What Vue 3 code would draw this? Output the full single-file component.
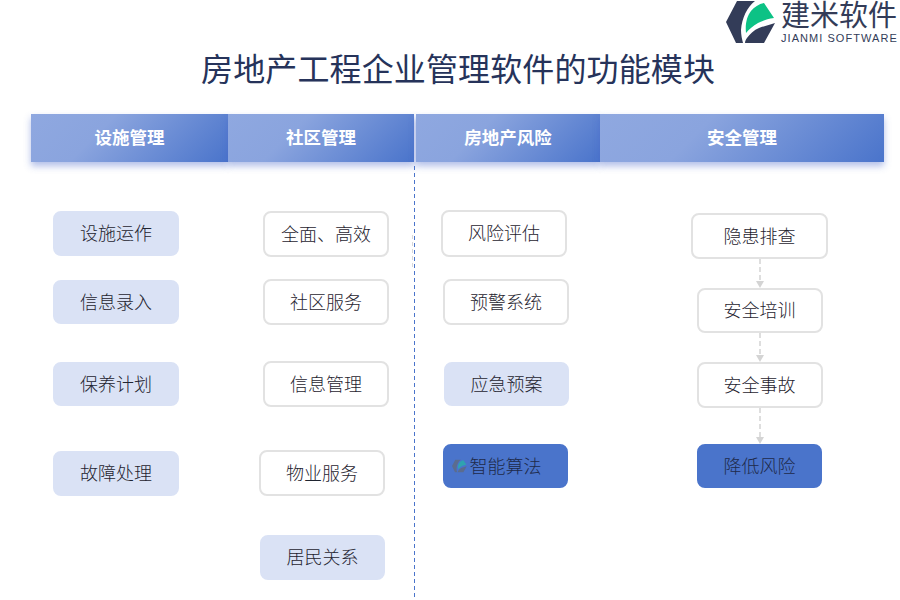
<template>
  <div class="page">
    <div class="brand">
      <svg class="brand-mark" viewBox="0 0 50 44" width="50" height="44" aria-hidden="true">
        <path fill="#333c58" d="M0 22 L11 1 H29 C21 7 16 18 15 30 C15 35 16 39 17 43 H10 Z" />
        <path fill="#0cc285" d="M20 33 C19 24 21 16 25 11 C28 7 33 4 38 3 L48 18 C41 19 36 21 32 23 C27 26 23 29 20 33 Z" />
        <path fill="#333c58" d="M49 23 L38 43 H19 C19 41 20 39 21 38 C24 34 28 30 33 28 C38 26 44 25 49 23 Z" />
      </svg>
      <div class="brand-text">
        <div class="brand-cn">建米软件</div>
        <div class="brand-en">JIANMI SOFTWARE</div>
      </div>
    </div>

    <h1 class="title">房地产工程企业管理软件的功能模块</h1>

    <div class="headers">
      <div v-for="h in headers" :key="h" class="header">{{ h }}</div>
    </div>

    <div class="board">
      <div class="divider"></div>
      <div class="divider-faint"></div>
      <div class="col col-a">
        <div v-for="n in colA" :key="n" class="node soft">{{ n }}</div>
      </div>
      <div class="col col-b">
        <div v-for="n in colB" :key="n" class="node">{{ n }}</div>
      </div>
      <div class="col col-c">
        <div class="node">风险评估</div>
        <div class="node">预警系统</div>
        <div class="node soft">应急预案</div>
        <div class="node strong">
          <svg class="ghost" viewBox="0 0 50 44" width="15" height="14" aria-hidden="true">
            <path fill="#5b6c8e" d="M0 22 L11 1 H29 C21 7 16 18 15 30 C15 35 16 39 17 43 H10 Z" />
            <path fill="#2fa3b0" d="M20 33 C19 24 21 16 25 11 C28 7 33 4 38 3 L48 18 C41 19 36 21 32 23 C27 26 23 29 20 33 Z" />
            <path fill="#5b6c8e" d="M49 23 L38 43 H19 C19 41 20 39 21 38 C24 34 28 30 33 28 C38 26 44 25 49 23 Z" />
          </svg>
          智能算法
        </div>
      </div>
      <div class="col col-d">
        <div class="node">隐患排查</div>
        <div class="link"><span class="dash"></span><span class="head"></span></div>
        <div class="node">安全培训</div>
        <div class="link"><span class="dash"></span><span class="head"></span></div>
        <div class="node">安全事故</div>
        <div class="link link-long"><span class="dash"></span><span class="head"></span></div>
        <div class="node strong">降低风险</div>
      </div>
    </div>
  </div>
</template>

<script setup>
const headers = ['设施管理', '社区管理', '房地产风险', '安全管理']
const colA = ['设施运作', '信息录入', '保养计划', '故障处理']
const colB = ['全面、高效', '社区服务', '信息管理', '物业服务', '居民关系']
</script>

<style>
html, body { margin: 0; background: #fff; }
</style>

<style scoped>
.page {
  position: relative;
  width: 900px;
  height: 600px;
  overflow: hidden;
  background: #fff;
  font-family: "Liberation Serif", "Noto Sans CJK SC", serif;
}
.brand {
  display: flex;
  justify-content: flex-end;
  gap: 5px;
  height: 46px;
  padding-right: 1px;
}
.brand-text { width: 118px; }
.brand-cn {
  font-family: "Liberation Sans", "Noto Sans CJK SC", sans-serif;
  font-size: 29px;
  line-height: 32px;
  color: #333c58;
  white-space: nowrap;
}
.brand-en {
  font-family: "Liberation Sans", sans-serif;
  font-size: 11px;
  line-height: 13px;
  letter-spacing: 1.05px;
  color: #333c58;
  white-space: nowrap;
}
.title {
  margin: 0;
  height: 68px;
  padding-left: 201px;
  font-size: 32px;
  line-height: 48px;
  font-weight: 400;
  letter-spacing: 0.13px;
  color: #26335a;
  white-space: nowrap;
}
.headers {
  display: flex;
  margin-left: 31px;
  width: 853px;
}
.header {
  height: 48px;
  line-height: 48px;
  text-align: center;
  font-size: 17.5px;
  font-weight: 700;
  color: #fff;
  background: linear-gradient(135deg, #8fa8e0 0%, #8aa4de 35%, #4a74cb 100%);
  box-shadow: 0 4px 7px rgba(70, 100, 200, 0.42);
}
.header:nth-child(1) { width: 197px; }
.header:nth-child(2) { width: 186px; margin-right: 2px; }
.header:nth-child(3) { width: 184px; }
.header:nth-child(4) { width: 284px; }
.board {
  position: relative;
  display: flex;
  height: 438px;
}
.divider {
  position: absolute;
  left: 414px;
  top: 4px;
  bottom: 0;
  width: 1px;
  background: repeating-linear-gradient(to bottom, #4a74cb 0 4px, transparent 4px 7px);
}
.divider-faint {
  position: absolute;
  left: 412px;
  top: 73px;
  height: 34px;
  width: 1px;
  background: repeating-linear-gradient(to bottom, #d8d8d8 0 4px, transparent 4px 7px);
}
.col {
  display: flex;
  flex-direction: column;
  align-items: flex-start;
}
.node {
  box-sizing: border-box;
  width: 126px;
  height: 46px;
  padding-bottom: 3px;
  display: flex;
  align-items: center;
  justify-content: center;
  position: relative;
  border: 2px solid #e2e2e2;
  border-radius: 8px;
  background: #fff;
  font-size: 18px;
  font-weight: 300;
  color: #1f2430;
  white-space: nowrap;
}
.soft { background: #dae2f5; border-color: #dae2f5; }
.strong { background: #4a74cb; border-color: #4a74cb; color: #1e2a4a; }
.ghost { position: absolute; left: 7px; top: 13px; }

.col-a { width: 210px; margin-left: 53px; padding-top: 49px; }
.col-a .node:nth-child(1) { height: 45px; }
.col-a .node:nth-child(2) { height: 44px; margin-top: 24px; }
.col-a .node:nth-child(3) { height: 44px; margin-top: 38px; }
.col-a .node:nth-child(4) { height: 45px; margin-top: 45px; }

.col-b { width: 178px; padding-top: 49px; }
.col-b .node:nth-child(2) { margin-top: 22px; }
.col-b .node:nth-child(3) { margin-top: 36px; }
.col-b .node:nth-child(4) { margin-top: 43px; margin-left: -4px; }
.col-b .node:nth-child(5) {
  width: 125px;
  height: 45px;
  margin-top: 39px;
  margin-left: -3px;
  background: #dae2f5;
  border-color: #dae2f5;
}

.col-c { width: 250px; padding-top: 48px; }
.col-c .node:nth-child(1) { height: 47px; }
.col-c .node:nth-child(2) { margin-top: 22px; margin-left: 2px; }
.col-c .node:nth-child(3) { width: 125px; height: 44px; margin-top: 37px; margin-left: 3px; }
.col-c .node:nth-child(4) { width: 125px; height: 44px; margin-top: 38px; margin-left: 2px; }

.col-d { width: 137px; padding-top: 51px; align-items: center; }
.col-d .node:nth-child(1) { width: 137px; }
.col-d .node:nth-child(3) { height: 45px; }
.col-d .node:nth-child(7) { width: 125px; height: 44px; }
.link {
  display: flex;
  flex-direction: column;
  align-items: center;
  height: 29px;
}
.link-long { height: 36px; }
.dash {
  flex: 1;
  width: 2px;
  background: repeating-linear-gradient(to bottom, #dedede 0 5px, transparent 5px 8px);
}
.head {
  width: 0;
  height: 0;
  border-left: 4px solid transparent;
  border-right: 4px solid transparent;
  border-top: 7px solid #d4d4d4;
}
</style>
